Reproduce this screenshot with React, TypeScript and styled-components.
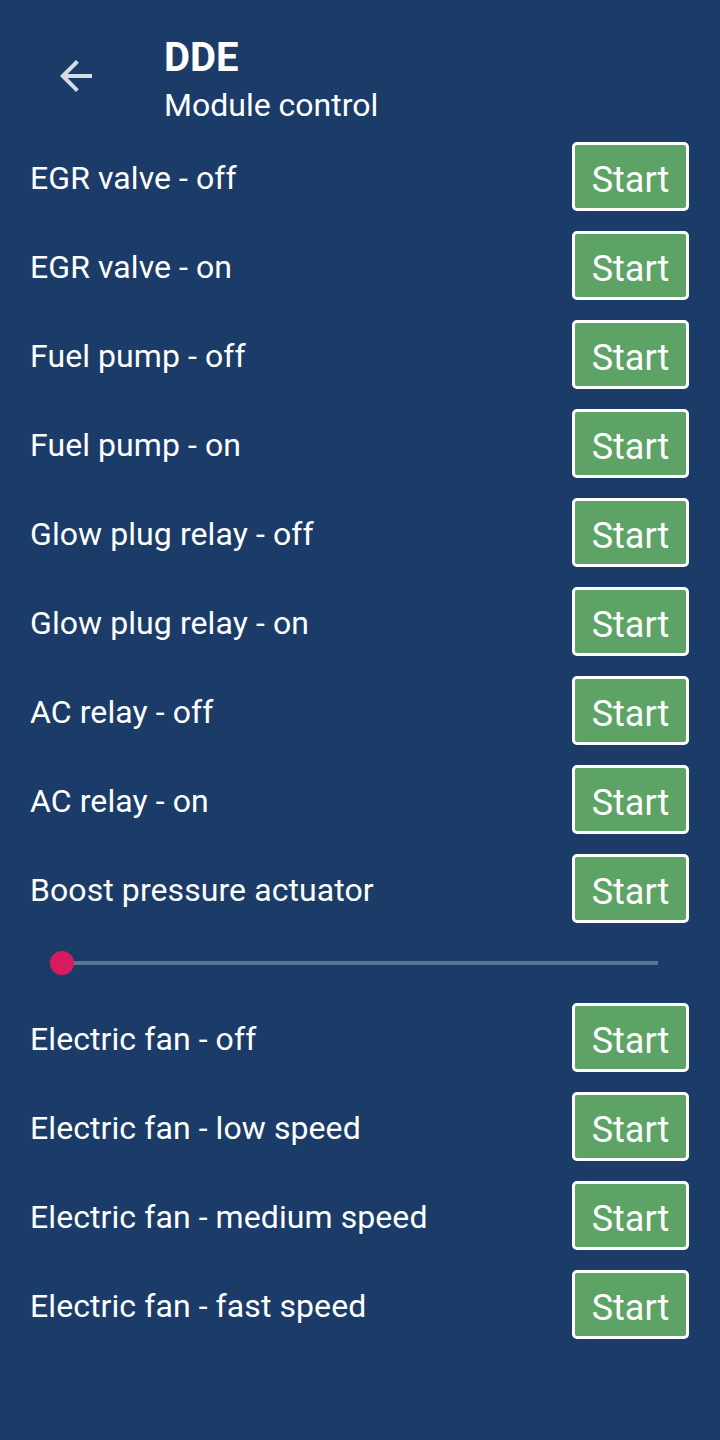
import React from "react";
import styled, { createGlobalStyle } from "styled-components";

const Global = createGlobalStyle`
  html, body { margin: 0; padding: 0; background: #1b3c68; }
  body { font-family: Roboto, "Noto Sans", sans-serif; color: #ffffff; }
  * { box-sizing: border-box; }
`;

const Page = styled.div`
  width: 720px;
  min-height: 1440px;
  background: #1b3c68;
  display: flex;
  flex-direction: column;
`;

const Header = styled.header`
  display: flex;
  align-items: flex-start;
  padding: 34px 0 0 52px;
  height: 124px;
`;

const BackButton = styled.button`
  width: 48px;
  height: 48px;
  margin-top: 18px;
  padding: 0;
  border: none;
  background: transparent;
  display: flex;
  align-items: center;
  justify-content: center;
  color: #d4dbe6;
`;

const TitleBlock = styled.div`
  margin-left: 64px;
  display: flex;
  flex-direction: column;
`;

const Title = styled.h1`
  margin: 0;
  font-size: 40px;
  line-height: 48px;
  font-weight: 700;
`;

const Subtitle = styled.div`
  margin-top: 4px;
  font-size: 32px;
  line-height: 38px;
  font-weight: 400;
`;

const List = styled.div`
  display: flex;
  flex-direction: column;
  gap: 20px;
  padding: 18px 31px 0 30px;
`;

const Row = styled.div`
  display: flex;
  align-items: center;
  justify-content: space-between;
  height: 69px;
`;

const Label = styled.span`
  font-size: 32px;
  line-height: 38px;
  padding-top: 2px;
  letter-spacing: 0.08px;
`;

const StartButton = styled.button`
  width: 117px;
  height: 69px;
  border: 3px solid #ffffff;
  border-radius: 5px;
  background: #5ea366;
  color: #ffffff;
  font-family: Roboto, "Noto Sans", sans-serif;
  font-size: 36px;
  line-height: 1;
  padding: 6px 0 0 0;
  display: flex;
  align-items: center;
  justify-content: center;
`;

const SliderWrap = styled.div`
  height: 40px;
  margin: 0 31px 0 32px;
  display: flex;
  align-items: center;
  position: relative;
`;

const Track = styled.div`
  flex: 1;
  height: 4px;
  background: #5b7594;
  position: relative;
`;

const Thumb = styled.div`
  position: absolute;
  top: 50%;
  width: 24px;
  height: 24px;
  margin: -12px 0 0 -12px;
  border-radius: 50%;
  background: #d81b60;
`;

const ArrowIcon = () => (
  <svg width="32" height="32" viewBox="0 0 32 32" fill="none">
    <path
      d="M32 14H7.7l11.2-11.2L16 0 0 16l16 16 2.8-2.8L7.7 18H32z"
      fill="currentColor"
    />
  </svg>
);

const items = [
  "EGR valve - off",
  "EGR valve - on",
  "Fuel pump - off",
  "Fuel pump - on",
  "Glow plug relay - off",
  "Glow plug relay - on",
  "AC relay - off",
  "AC relay - on",
  "Boost pressure actuator",
];

const fanItems = [
  "Electric fan - off",
  "Electric fan - low speed",
  "Electric fan - medium speed",
  "Electric fan - fast speed",
];

const ControlRow = ({ label }: { label: string }) => (
  <Row>
    <Label>{label}</Label>
    <StartButton>Start</StartButton>
  </Row>
);

export default function App() {
  const value = 0;
  return (
    <Page>
      <Global />
      <Header>
        <BackButton aria-label="Back">
          <ArrowIcon />
        </BackButton>
        <TitleBlock>
          <Title>DDE</Title>
          <Subtitle>Module control</Subtitle>
        </TitleBlock>
      </Header>
      <List>
        {items.map((l) => (
          <ControlRow key={l} label={l} />
        ))}
        <SliderWrap>
          <Track>
            <Thumb style={{ left: `${value}%` }} />
          </Track>
        </SliderWrap>
        {fanItems.map((l) => (
          <ControlRow key={l} label={l} />
        ))}
      </List>
    </Page>
  );
}
